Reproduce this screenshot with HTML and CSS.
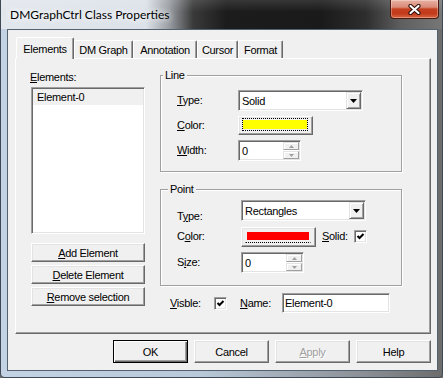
FILE: index.html
```html
<!DOCTYPE html>
<html>
<head>
<meta charset="utf-8">
<title>DMGraphCtrl Class Properties</title>
<link rel="stylesheet" href="styles.css">
</head>
<body>
<div class="window">
  <div class="titlebar">
    <span class="title">DMGraphCtrl Class Properties</span>
    <div class="close">
      <svg width="13" height="11" viewBox="0 0 13 11">
        <path d="M2.5 2 L10.5 9 M10.5 2 L2.5 9" stroke="#2b0d08" stroke-width="4.2" stroke-linecap="round" fill="none"/>
        <path d="M2.5 2 L10.5 9 M10.5 2 L2.5 9" stroke="#fff" stroke-width="2.2" stroke-linecap="round" fill="none"/>
      </svg>
    </div>
  </div>
  <div class="frame-body">
    <div class="client">
      <div class="tabs">
        <div class="tab active t-elements">Elements</div>
        <div class="tab t-graph">DM Graph</div>
        <div class="tab t-annot">Annotation</div>
        <div class="tab t-cursor">Cursor</div>
        <div class="tab t-format">Format</div>
      </div>
      <div class="panel">
        <div class="left-col">
          <div class="list-label"><u>E</u>lements:</div>
          <div class="listbox">
            <div class="item">Element-0</div>
          </div>
          <div class="btn-stack">
            <div class="btn"><span><u>A</u>dd Element</span></div>
            <div class="btn"><span><u>D</u>elete Element</span></div>
            <div class="btn"><span><u>R</u>emove selection</span></div>
          </div>
        </div>
        <div class="right-col">
          <div class="group">
            <div class="legend">Line</div>
            <div class="form line-form">
              <div class="lbl"><u>T</u>ype:</div>
              <div class="combo">
                <span class="combo-text">Solid</span>
                <span class="drop"><svg width="7" height="4" viewBox="0 0 7 4"><polygon points="0,0 7,0 3.5,4" fill="#000"/></svg></span>
              </div>
              <div class="lbl"><u>C</u>olor:</div>
              <div class="color-btn"><div class="swatch yellow"></div></div>
              <div class="lbl"><u>W</u>idth:</div>
              <div class="spin-edit">
                <span class="edit-text">0</span>
                <span class="spin">
                  <span class="sb"><svg width="5" height="3" viewBox="0 0 5 3"><polygon points="0,3 5,3 2.5,0" fill="#a0a0a0"/></svg></span>
                  <span class="sb"><svg width="5" height="3" viewBox="0 0 5 3"><polygon points="0,0 5,0 2.5,3" fill="#a0a0a0"/></svg></span>
                </span>
              </div>
            </div>
          </div>
          <div class="group point-group">
            <div class="legend point-legend">Point</div>
            <div class="form point-form">
              <div class="lbl type-low">T<u>y</u>pe:</div>
              <div class="combo">
                <span class="combo-text">Rectangles</span>
                <span class="drop"><svg width="7" height="4" viewBox="0 0 7 4"><polygon points="0,0 7,0 3.5,4" fill="#000"/></svg></span>
              </div>
              <div class="lbl">C<u>o</u>lor:</div>
              <div class="color-row">
                <div class="color-btn"><div class="swatch red"></div></div>
                <span class="solid-label"><u>S</u>olid:</span>
                <span class="check"><svg width="9" height="9" viewBox="0 0 9 9"><polyline points="1.5,4 3.5,6 7.5,2" fill="none" stroke="#000" stroke-width="2"/></svg></span>
              </div>
              <div class="lbl">S<u>i</u>ze:</div>
              <div class="spin-edit">
                <span class="edit-text">0</span>
                <span class="spin">
                  <span class="sb"><svg width="5" height="3" viewBox="0 0 5 3"><polygon points="0,3 5,3 2.5,0" fill="#a0a0a0"/></svg></span>
                  <span class="sb"><svg width="5" height="3" viewBox="0 0 5 3"><polygon points="0,0 5,0 2.5,3" fill="#a0a0a0"/></svg></span>
                </span>
              </div>
            </div>
          </div>
          <div class="vis-row">
            <span class="vis-label"><u>V</u>isble:</span>
            <span class="check"><svg width="9" height="9" viewBox="0 0 9 9"><polyline points="1.5,4 3.5,6 7.5,2" fill="none" stroke="#000" stroke-width="2"/></svg></span>
            <span class="name-label"><u>N</u>ame:</span>
            <div class="name-edit">Element-0</div>
          </div>
        </div>
      </div>
      <div class="dlg-buttons">
        <div class="btn dbtn default"><span>OK</span></div>
        <div class="btn dbtn"><span>Cancel</span></div>
        <div class="btn dbtn disabled"><span><u>A</u>pply</span></div>
        <div class="btn dbtn"><span>Help</span></div>
      </div>
    </div>
  </div>
</div>
</body>
</html>
```

FILE: styles.css
```css
html, body {
  margin: 0;
  padding: 0;
}
body {
  width: 443px;
  height: 378px;
  overflow: hidden;
  background: #6a6a6a;
  font-family: "Liberation Sans", Arial, sans-serif;
  font-size: 11px;
  letter-spacing: -0.3px;
  color: #000;
}
u { text-decoration: underline; text-underline-offset: 1px; }

.window {
  box-sizing: border-box;
  width: 443px;
  height: 378px;
  display: flex;
  flex-direction: column;
  border: 1px solid #3e4955;
  border-top: 0;
  border-radius: 0 0 5px 5px;
  overflow: hidden;
}

.titlebar {
  height: 29px;
  flex: none;
  display: flex;
  align-items: flex-start;
  background:
    linear-gradient(180deg, rgba(255,255,255,0.12) 0, rgba(255,255,255,0) 12px),
    linear-gradient(90deg, #e2e7ed 0, #dce2e9 145px, #9a9ea3 168px, #3a3a3a 192px, #1c1c1c 225px, #1a1a1a 320px, #2e2e2e 365px, #5f5f5f 400px, #777 441px);
}
.title {
  flex: 1;
  font-family: Lato, "Noto Sans", sans-serif;
  font-size: 12px;
  letter-spacing: 0;
  line-height: 29px;
  padding-left: 9px;
  color: #000;
  text-shadow: 0 0 6px #fff, 0 0 10px #fff;
}
.close {
  box-sizing: border-box;
  width: 49px;
  height: 19px;
  margin-right: 3px;
  border: 1px solid #4a1a10;
  border-top: 0;
  border-radius: 0 0 4px 4px;
  background: linear-gradient(180deg, #e9b2a5 0, #d98a76 40%, #c4401f 50%, #c23b1c 75%, #d8663f 100%);
  box-shadow: inset 0 0 0 1px rgba(255,255,255,0.3);
  display: flex;
  align-items: center;
  justify-content: center;
}

.frame-body {
  flex: 1;
  display: flex;
  padding: 0 4px 6px 6px;
  background: linear-gradient(90deg, #c3d3e3 0, #b9c9d9 45%, #8c9096 82%, #6c6c6c 100%);
}
.client {
  flex: 1;
  display: flex;
  flex-direction: column;
  border: 1px solid #54616f;
  background: #f0f0f0;
  padding: 7px 6px 7px 7px;
}

/* tabs */
.tabs {
  height: 21px;
  flex: none;
  display: flex;
  align-items: flex-end;
  padding-left: 1px;
}
.tab {
  box-sizing: border-box;
  height: 18px;
  display: flex;
  align-items: center;
  justify-content: center;
  border-top: 1px solid #fff;
  border-left: 1px solid #fff;
  border-right: 1px solid #696969;
  box-shadow: inset -1px 0 #a0a0a0;
  border-radius: 2px 2px 0 0;
  background: #f0f0f0;
}
.tab.active {
  height: 22px;
  margin-bottom: -1px;
  position: relative;
  z-index: 1;
}
.t-elements { width: 58px; }
.t-graph { width: 59px; }
.t-annot { width: 64px; }
.t-cursor { width: 41px; }
.t-format { width: 45px; }

/* panel */
.panel {
  box-sizing: border-box;
  height: 276px;
  flex: none;
  display: flex;
  gap: 15px;
  padding-left: 15px;
  border: 1px solid;
  border-color: #fff #696969 #696969 #fff;
  box-shadow: inset -1px -1px #a0a0a0;
}

.left-col {
  width: 114px;
  padding-top: 12px;
  display: flex;
  flex-direction: column;
}
.list-label {
  line-height: 13px;
  margin-left: -1px;
}
.listbox {
  box-sizing: border-box;
  margin-top: 3px;
  height: 147px;
  background: #fff;
  border: 1px solid;
  border-color: #a0a0a0 #fff #fff #a0a0a0;
  box-shadow: inset 1px 1px #696969, inset -1px -1px #e3e3e3;
  padding: 1px;
}
.item {
  height: 16px;
  line-height: 16px;
  padding-left: 4px;
  background: #f0f0f0;
}
.btn-stack {
  margin-top: 9px;
  display: flex;
  flex-direction: column;
  gap: 3px;
}

.btn {
  box-sizing: border-box;
  height: 19px;
  display: flex;
  align-items: center;
  justify-content: center;
  background: #f0f0f0;
  border: 1px solid;
  border-color: #fff #696969 #696969 #fff;
  box-shadow: inset -1px -1px #a0a0a0, inset 1px 1px #e3e3e3;
}

.right-col {
  width: 242px;
  padding-top: 16px;
  display: flex;
  flex-direction: column;
}
.group {
  box-sizing: border-box;
  height: 97px;
  border: 1px solid #a0a0a0;
  box-shadow: inset 1px 1px #fff, 1px 1px #fff;
}
.point-group { margin-top: 17px; }
.legend {
  width: fit-content;
  margin: -7px 0 0 2px;
  padding: 0 2px;
  line-height: 13px;
  background: #f0f0f0;
}
.point-legend { margin-left: 7px; }

.form {
  display: grid;
  padding-left: 16px;
  align-items: center;
}
.line-form {
  margin-top: 8px;
  grid-template-columns: 61px auto;
  grid-template-rows: 21px 19px 21px;
  row-gap: 5px;
}
.point-form {
  margin-top: 4px;
  grid-template-columns: 64px auto;
  grid-template-rows: 21px 21px 21px;
  row-gap: 5px;
}
.lbl { line-height: 13px; }
.type-low { align-self: start; margin-top: 10px; }

.combo {
  box-sizing: border-box;
  width: 125px;
  height: 21px;
  display: flex;
  align-items: center;
  background: #fff;
  border: 1px solid;
  border-color: #a0a0a0 #fff #fff #a0a0a0;
  box-shadow: inset 1px 1px #696969, inset -1px -1px #e3e3e3;
  padding: 1px;
}
.combo-text { flex: 1; padding-left: 2px; }
.drop {
  box-sizing: border-box;
  width: 15px;
  height: 17px;
  display: flex;
  align-items: center;
  justify-content: center;
  background: #f0f0f0;
  border: 1px solid;
  border-color: #e3e3e3 #696969 #696969 #e3e3e3;
  box-shadow: inset 1px 1px #fff, inset -1px -1px #a0a0a0;
}

.color-btn {
  box-sizing: border-box;
  width: 75px;
  height: 19px;
  align-self: start;
  background: #f0f0f0;
  border: 1px solid;
  border-color: #fff #696969 #696969 #fff;
  box-shadow: inset -1px -1px #a0a0a0, inset 1px 1px #e3e3e3;
  padding: 1px 4px 3px 3px;
  display: flex;
}
.swatch {
  flex: 1;
  border: 1px dotted #000;
}
.swatch.yellow {
  background: #ffff00;
  background-clip: content-box;
  padding: 1px 0;
}
.color-row {
  display: flex;
  align-items: center;
  height: 21px;
}
.color-row .color-btn { height: 20px; align-self: center; }
.swatch.red {
  background: #ff0000;
  background-clip: content-box;
  border-top-color: transparent;
  border-left-color: transparent;
  border-right-color: transparent;
  padding: 2px 1px 2px 1px;
}
.solid-label { margin-left: 6px; width: 32px; line-height: 13px; }

.check {
  box-sizing: border-box;
  width: 13px;
  height: 13px;
  flex: none;
  display: flex;
  align-items: center;
  justify-content: center;
  background: #fff;
  border: 1px solid;
  border-color: #a0a0a0 #fff #fff #a0a0a0;
  box-shadow: inset 1px 1px #696969, inset -1px -1px #e3e3e3;
}

.spin-edit {
  box-sizing: border-box;
  width: 63px;
  height: 21px;
  display: flex;
  align-items: stretch;
  background: #fff;
  border: 1px solid;
  border-color: #a0a0a0 #fff #fff #a0a0a0;
  box-shadow: inset 1px 1px #696969, inset -1px -1px #e3e3e3;
  padding: 1px 1px 1px 2px;
}
.edit-text { flex: 1; display: flex; align-items: center; padding-left: 1px; }
.spin {
  width: 16px;
  display: flex;
  flex-direction: column;
  gap: 1px;
}
.sb {
  box-sizing: border-box;
  flex: 1;
  display: flex;
  align-items: center;
  justify-content: center;
  background: #f0f0f0;
  border: 1px solid;
  border-color: #e3e3e3 #a0a0a0 #a0a0a0 #e3e3e3;
  box-shadow: inset 1px 1px #fff;
}

.vis-row {
  margin-top: 7px;
  height: 20px;
  display: flex;
  align-items: center;
  padding-left: 10px;
}
.vis-label { width: 44px; }
.name-label { margin-left: 13px; width: 42px; }
.name-edit {
  box-sizing: border-box;
  width: 108px;
  height: 20px;
  display: flex;
  align-items: center;
  padding-left: 2px;
  background: #fff;
  border: 1px solid;
  border-color: #a0a0a0 #fff #fff #a0a0a0;
  box-shadow: inset 1px 1px #696969, inset -1px -1px #e3e3e3;
}

.dlg-buttons {
  margin-top: 6px;
  height: 23px;
  flex: none;
  display: flex;
  justify-content: flex-end;
  gap: 6px;
}
.dbtn {
  width: 75px;
  height: 23px;
}
.dbtn.default {
  border: 1px solid #000;
  box-shadow: inset 1px 1px #fff, inset -1px -1px #696969, inset -2px -2px #a0a0a0;
}
.dbtn.disabled {
  color: #a0a0a0;
  text-shadow: 1px 1px #fff;
}
```
